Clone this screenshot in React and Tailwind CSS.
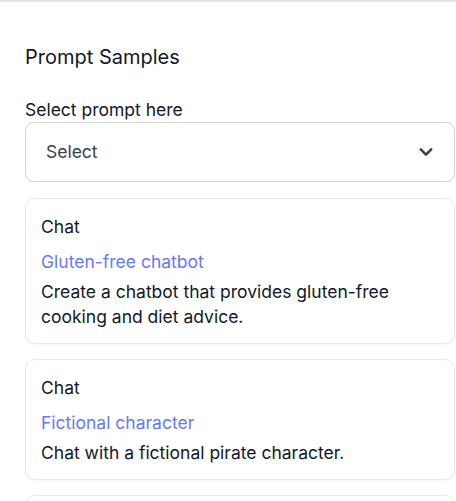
import React from "react";

const samples = [
  {
    type: "Chat",
    title: "Gluten-free chatbot",
    desc: "Create a chatbot that provides gluten-free cooking and diet advice.",
  },
  {
    type: "Chat",
    title: "Fictional character",
    desc: "Chat with a fictional pirate character.",
  },
];

function Chevron() {
  return (
    <svg width="18" height="18" viewBox="0 0 24 24" fill="none">
      <path
        d="M5 8.5l7 7 7-7"
        stroke="#374151"
        strokeWidth="3.4"
        strokeLinecap="round"
        strokeLinejoin="round"
      />
    </svg>
  );
}

function SampleCard({ type, title, desc }) {
  return (
    <div className="rounded-[10px] border border-[#e8e8ea] bg-white px-[15px] pt-[15px] pb-[14px] shadow-[0_1px_2px_rgba(0,0,0,0.03)]">
      <div className="mb-[10px] text-[17.5px] leading-[25px] text-[#111827]">{type}</div>
      <div className="mb-[5px] text-[17.5px] leading-[25px] text-[#6679f4]">{title}</div>
      <div className="text-[17.5px] leading-[25px] text-[#111827]">{desc}</div>
    </div>
  );
}

export default function App() {
  return (
    <div className="h-[501px] overflow-hidden border-t-2 border-[#e6e6ea] bg-white font-['Inter',sans-serif]">
      <div className="pl-[25px] pr-px pt-[41px]">
        <h2 className="text-[20px] leading-7 text-[#111827]">Prompt Samples</h2>

        <label className="mt-[27px] block text-[17.5px] leading-6 text-[#111827]">
          Select prompt here
        </label>
        <button className="flex h-[60px] w-full items-center justify-between rounded-lg border border-[#d4d4da] bg-white pl-5 pr-[19px] text-left">
          <span className="text-[17.5px] text-[#374151]">Select</span>
          <Chevron />
        </button>

        <div className="mt-4 flex flex-col gap-[15px]">
          {samples.map((s, i) => (
            <SampleCard key={i} {...s} />
          ))}
          {/* next card, scrolled below the fold */}
          <div className="h-[60px] rounded-[10px] border border-[#e8e8ea] bg-white" />
        </div>
      </div>
    </div>
  );
}
